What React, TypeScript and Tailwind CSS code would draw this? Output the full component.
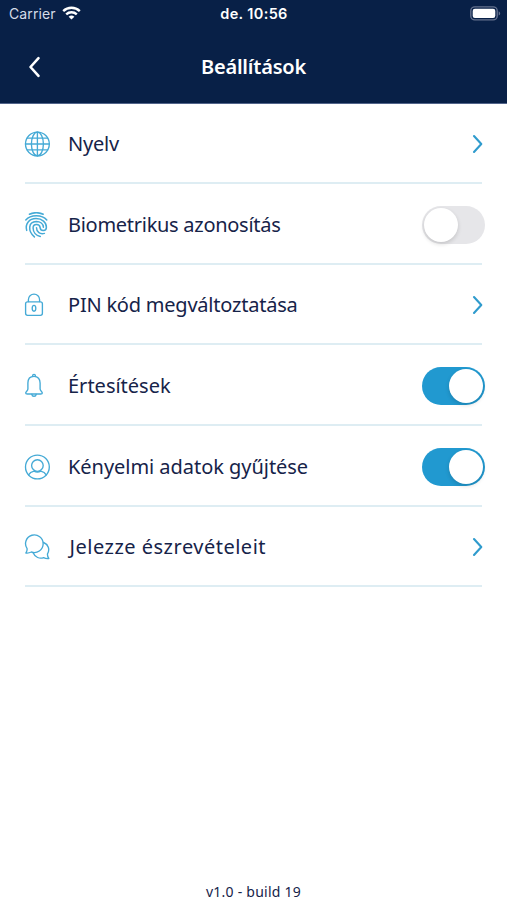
import { useState } from 'react';
import type { ReactNode } from 'react';

type Setting = {
    id: string;
    label: string;
    icon: ReactNode;
    labelClass: string;
    toggle?: boolean;
};

function LineIcon({ children }: { children: ReactNode }) {
    return (
        <svg width="26" height="26" viewBox="0 0 26 26" fill="none" stroke="#45aad6" strokeWidth="1.35" strokeLinecap="round" strokeLinejoin="round" className="shrink-0">
            {children}
        </svg>
    );
}

const globeIcon = (
    <LineIcon>
        <circle cx="13.4" cy="13" r="11.9" />
        <ellipse cx="13.4" cy="13" rx="6" ry="11.9" />
        <path d="M13.4 1.1v23.8M1.5 13h23.8M3.2 7.1h20.4M3.2 18.9h20.4" />
    </LineIcon>
);

const fingerprintIcon = (
    <LineIcon>
        <g strokeWidth="1.5">
            <path d="M5.4 2.3c4.2-2 9.6-2 13.8 0" />
            <path d="M1.8 8C6.6 2.2 18 2.2 22.8 8" />
            <path d="M2.7 18.4C.9 11.8 5.3 6.6 12 6.6c6.2 0 10.4 3.9 10.4 8.6 0 4.3-5.9 4.4-6.3.4-.5-4.2-7-4.1-7 .3 0 4.2 3 7.6 7.2 8.5" />
            <path d="M10.4 24.9C3.6 19 4.1 9.9 12.3 9.6c4 0 6.9 2.3 7.1 5.6" />
            <path d="M12.5 15.8c0 4.5 3.7 6.8 7.9 5.6" />
        </g>
    </LineIcon>
);

const lockIcon = (
    <LineIcon>
        <rect x="1.6" y="9.8" width="16.8" height="13.5" rx="2" />
        <path d="M4.4 9.6V7.7a5.6 5.6 0 0 1 11.2 0v1.9" />
        <ellipse cx="10" cy="16.3" rx="1.8" ry="2.9" />
    </LineIcon>
);

const bellIcon = (
    <LineIcon>
        <path d="M8.6 3.4V2.8a1.4 1.4 0 0 1 2.8 0v.6" />
        <path d="M10 3.3c-4 0-6.1 2.8-6.1 6.7v6.1c0 1.7-2.2 2.4-2.2 3.8 0 .8.7 1.1 1.6 1.1h13.4c.9 0 1.6-.3 1.6-1.1 0-1.4-2.2-2.1-2.2-3.8V10c0-3.9-2.1-6.7-6.1-6.7Z" />
        <path d="M7.8 21.3c.3 2.6 4.1 2.6 4.4 0" />
    </LineIcon>
);

const profileIcon = (
    <LineIcon>
        <circle cx="13.4" cy="13" r="11.9" />
        <circle cx="13.4" cy="11.5" r="5.8" />
        <path d="M4.6 20.8c1-1.7 3-2.9 5.4-3.6 2.1 1.1 4.7 1.1 6.8 0 2.4.7 4.4 1.9 5.4 3.6" />
    </LineIcon>
);

const chatIcon = (
    <LineIcon>
        <path d="M3.1 14.7A8.8 8.8 0 1 1 7.4 18c-1.8.9-3.8 1.2-5.5 1 .8-1.1 1.3-2.7 1.2-4.3Z" />
        <path d="M19.6 8.5c4.7 1.8 6.6 7.2 3.8 11.6 0 1.6.5 3.2 1.4 4.4-1.9.2-3.7-.1-5.2-.9-3.9 1.6-8.6-.3-10.3-4.7" />
    </LineIcon>
);

const settings: Setting[] = [
    { id: 'language', label: 'Nyelv', icon: globeIcon, labelClass: 'ml-[18px] tracking-[-0.2px]' },
    { id: 'biometric', label: 'Biometrikus azonosítás', icon: fingerprintIcon, labelClass: 'ml-[18px] tracking-[-0.28px]', toggle: true },
    { id: 'pin', label: 'PIN kód megváltoztatása', icon: lockIcon, labelClass: 'ml-[18px] tracking-[-0.22px]' },
    { id: 'notifications', label: 'Értesítések', icon: bellIcon, labelClass: 'ml-[18px] tracking-normal', toggle: true },
    { id: 'data', label: 'Kényelmi adatok gyűjtése', icon: profileIcon, labelClass: 'ml-[18px] tracking-[-0.04px]', toggle: true },
    { id: 'feedback', label: 'Jelezze észrevételeit', icon: chatIcon, labelClass: 'ml-[19.5px] tracking-[0.5px]' },
];

function StatusBar() {
    return (
        <div className="grid h-[26px] grid-cols-3 items-center pl-[9px] pr-[6px] font-['Inter',sans-serif] text-[14px] text-white">
            <div className="flex items-center gap-[6px] text-[#d5dce8]">
                <span className="tracking-[0.1px]">Carrier</span>
                <svg width="19" height="14" viewBox="0 0 19 14" fill="none" stroke="#fff" strokeWidth="2.4">
                    <path d="M1.2 5.1a12 12 0 0 1 16.6 0" />
                    <path d="M4.2 8.3a7.7 7.7 0 0 1 10.6 0" />
                    <path d="M9.5 13.5 6.6 10.7a4.3 4.3 0 0 1 5.8 0Z" fill="#fff" stroke="none" />
                </svg>
            </div>
            <span className="pt-[2px] pr-[2px] text-center text-[14.5px] font-semibold tracking-[0.35px]">de. 10:56</span>
            <svg width="31" height="15" viewBox="0 0 31 15" className="justify-self-end">
                <rect x=".8" y=".9" width="26.4" height="13" rx="4" fill="none" stroke="#64718e" strokeWidth="1.4" />
                <rect x="2.7" y="2.8" width="22.6" height="9.2" rx="2.2" fill="#fff" />
                <path d="M28.7 5.2c2 .8 2 3.6 0 4.4Z" fill="#64718e" />
            </svg>
        </div>
    );
}

function Toggle({ on, label, onChange }: { on: boolean; label: string; onChange: () => void }) {
    return (
        <button
            role="switch"
            aria-checked={on}
            aria-label={label}
            onClick={onChange}
            className={`-mr-[3px] flex h-[38px] w-[63px] shrink-0 items-center rounded-full px-[2px] transition-colors ${on ? 'justify-end bg-[#2199d0]' : 'justify-start bg-[#e6e6e9]'}`}
        >
            <span className="size-[34px] rounded-full bg-white shadow-[0_2px_4px_rgba(0,0,0,0.15)]"></span>
        </button>
    );
}

export default function App() {
    const [enabled, setEnabled] = useState<Record<string, boolean>>({ biometric: false, notifications: true, data: true });

    return (
        <div className="flex h-[900px] w-[507px] flex-col overflow-hidden bg-white font-['Noto_Sans',sans-serif] text-[#162349]">
            <header className="h-[103.5px] shrink-0 border-b border-[#52648a] bg-[#082047]">
                <StatusBar />
                <div className="grid h-[82px] grid-cols-[60px_1fr_60px] items-center text-white">
                    <button aria-label="Vissza" className="pl-[28px]">
                        <svg width="13" height="22" viewBox="0 0 13 22" fill="none" stroke="currentColor" strokeWidth="2.6" strokeLinecap="round" strokeLinejoin="round">
                            <path d="m10.5 2.2-8 8.8 8 8.8" />
                        </svg>
                    </button>
                    <h1 className="text-center text-[20px] font-semibold tracking-[-0.2px]">Beállítások</h1>
                </div>
            </header>
            <main className="flex-1">
                {settings.map((item) => (
                    <div key={item.id} className="mx-[25px] flex h-[80.67px] items-center border-b-2 border-[#deedf3] pt-[2.4px]">
                        <div className="-ml-px flex flex-1 items-center">
                            {item.icon}
                            <span className={`whitespace-nowrap text-[20px] ${item.labelClass}`}>{item.label}</span>
                        </div>
                        {item.toggle ? (
                            <Toggle on={enabled[item.id]} label={item.label} onChange={() => setEnabled({ ...enabled, [item.id]: !enabled[item.id] })} />
                        ) : (
                            <svg width="11" height="20" viewBox="0 0 11 20" fill="none" stroke="#2f9bcd" strokeWidth="2.1" strokeLinecap="round" strokeLinejoin="round" className="-mr-px shrink-0">
                                <path d="m2 2 7.3 8L2 18" />
                            </svg>
                        )}
                    </div>
                ))}
            </main>
            <footer className="h-[20px] text-center text-[14px] leading-[24px] tracking-[0.25px]">v1.0 - build 19</footer>
        </div>
    );
}
